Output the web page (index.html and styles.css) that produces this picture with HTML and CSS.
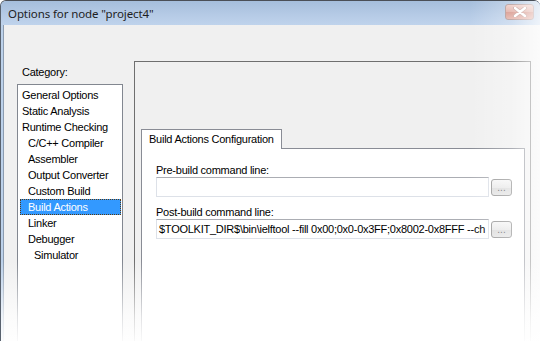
FILE: index.html
```html
<!DOCTYPE html>
<html>
<head>
<meta charset="utf-8">
<link rel="stylesheet" href="styles.css">
</head>
<body>
<div class="window">
  <div class="titlebar">
    <span class="title">Options for node "project4"</span>
    <div class="close">
      <svg width="16" height="10" viewBox="0 0 16 10"><path d="M3 1 L13 9 M13 1 L3 9" stroke="#b98a84" stroke-width="4" stroke-linecap="round"/><path d="M3 1 L13 9 M13 1 L3 9" stroke="#ffffff" stroke-width="2.4" stroke-linecap="round"/></svg>
    </div>
  </div>
  <div class="client">
    <div class="category">
      <div class="cat-label">Category:</div>
      <div class="listbox">
        <div class="item l0">General Options</div>
        <div class="item l0">Static Analysis</div>
        <div class="item l0">Runtime Checking</div>
        <div class="item l1">C/C++ Compiler</div>
        <div class="item l1">Assembler</div>
        <div class="item l1">Output Converter</div>
        <div class="item l1">Custom Build</div>
        <div class="item l1 selected"><span class="sel">Build Actions</span></div>
        <div class="item l1">Linker</div>
        <div class="item l1">Debugger</div>
        <div class="item l2">Simulator</div>
      </div>
    </div>
    <div class="panel">
      <div class="tabs">
        <div class="tab">Build Actions Configuration</div>
      </div>
      <div class="tabpage">
        <div class="field-label">Pre-build command line:</div>
        <div class="row">
          <div class="edit"></div>
          <div class="btn">...</div>
        </div>
        <div class="field-label second">Post-build command line:</div>
        <div class="row">
          <div class="edit">$TOOLKIT_DIR$\bin\ielftool --fill 0x00;0x0-0x3FF;0x8002-0x8FFF --ch</div>
          <div class="btn">...</div>
        </div>
      </div>
    </div>
  </div>
  <div class="fade-right"></div>
  <div class="fade-bottom"></div>
</div>
</body>
</html>
```
FILE: styles.css
```css
html, body {
  margin: 0;
  padding: 0;
  background: #ffffff;
}
body {
  width: 540px;
  height: 341px;
  overflow: hidden;
  font-family: "Liberation Sans", Arial, sans-serif;
  font-size: 11px;
  letter-spacing: -0.25px;
  color: #000;
}
.window {
  position: relative;
  width: 540px;
  height: 341px;
  box-sizing: border-box;
  border-top: 1px solid #4a4f57;
  border-left: 1px solid #59626e;
  border-radius: 6px 6px 0 0;
  background: #bcd1ea;
  display: flex;
  flex-direction: column;
  overflow: hidden;
}
.titlebar {
  height: 24px;
  flex: none;
  display: flex;
  align-items: center;
  justify-content: space-between;
  padding: 0 6px 0 7px;
  background: linear-gradient(#a5bedc, #b6cbe6 60%, #bfd3ec);
}
.title {
  font-family: "Noto Sans", "Open Sans", sans-serif;
  font-size: 11.5px;
  color: #1e1e1e;
  padding-top: 1px;
  letter-spacing: -0.1px;
}
.close {
  width: 29px;
  height: 16px;
  box-sizing: border-box;
  margin-top: -3px;
  border: 1px solid #a88a88;
  border-radius: 3px;
  background: linear-gradient(#ecc3bc, #dca095 50%, #d08477 51%, #e0a79c);
  display: flex;
  align-items: center;
  justify-content: center;
}
.close svg { display: block; }
.client {
  flex: 1;
  display: flex;
  margin-left: 2px;
  border-left: 1px solid #8c9cb0;
  background: #f0f0f0;
  padding-left: 13px;
}
.category {
  width: 106px;
  flex: none;
  padding-top: 41px;
}
.cat-label {
  height: 13px;
  line-height: 13px;
  padding-left: 5px;
  margin-bottom: 5px;
}
.listbox {
  height: 400px;
  box-sizing: border-box;
  background: #ffffff;
  border: 1px solid #828790;
  padding: 2px 1px;
}
.item {
  height: 16px;
  line-height: 16px;
  white-space: nowrap;
}
.l0 { padding-left: 3px; }
.l1 { padding-left: 9px; }
.l2 { padding-left: 15px; }
.item.selected {
  padding-left: 1px;
}
.sel {
  display: block;
  height: 16px;
  line-height: 14px;
  box-sizing: border-box;
  background: #3399ff;
  color: #ffffff;
  border: 1px dotted #5a3a10;
  padding-left: 7px;
}
.panel {
  margin-left: 11px;
  margin-top: 36px;
  width: 397px;
  flex: none;
  box-sizing: border-box;
  border: 1px solid #6f6f6f;
  border-bottom: none;
  padding: 67px 5px 0 6px;
  display: flex;
  flex-direction: column;
}
.tabs {
  display: flex;
  height: 19px;
  position: relative;
  z-index: 1;
}
.tab {
  box-sizing: border-box;
  height: 20px;
  padding: 0 7px;
  line-height: 19px;
  background: #ffffff;
  border: 1px solid #898c95;
  border-bottom: none;
}
.tabpage {
  flex: 1;
  background: #ffffff;
  border: 1px solid #898c95;
  border-bottom: none;
  padding: 15px 12px 0 14px;
}
.field-label {
  height: 13px;
  line-height: 13px;
}
.field-label.second {
  margin-top: 9px;
}
.row {
  display: grid;
  grid-template-columns: minmax(0, 1fr) 21px;
  gap: 2px;
  align-items: center;
}
.edit {
  min-width: 0;
  height: 20px;
  box-sizing: border-box;
  border: 1px solid #dde1e8;
  border-top-color: #abadb3;
  background: #ffffff;
  line-height: 18px;
  padding-left: 2px;
  white-space: nowrap;
  overflow: hidden;
}
.btn {
  height: 17px;
  box-sizing: border-box;
  border: 1px solid #9a9a9a;
  border-radius: 3px;
  background: linear-gradient(#f6f6f6, #e9e9e9 50%, #dcdcdc 51%, #e6e6e6);
  color: #6a6a6a;
  font-size: 10px;
  line-height: 15px;
  text-align: center;
  letter-spacing: 0;
}
.fade-right {
  position: absolute;
  top: 0;
  right: 0;
  width: 70px;
  height: 100%;
  background: linear-gradient(to right, rgba(255,255,255,0), rgba(255,255,255,0.3) 60%, rgba(255,255,255,0.75));
  pointer-events: none;
}
.fade-bottom {
  position: absolute;
  left: 0;
  bottom: 0;
  width: 100%;
  height: 80px;
  background: linear-gradient(rgba(255,255,255,0), rgba(255,255,255,0.75) 70%, rgba(255,255,255,0.95));
  pointer-events: none;
}
```
